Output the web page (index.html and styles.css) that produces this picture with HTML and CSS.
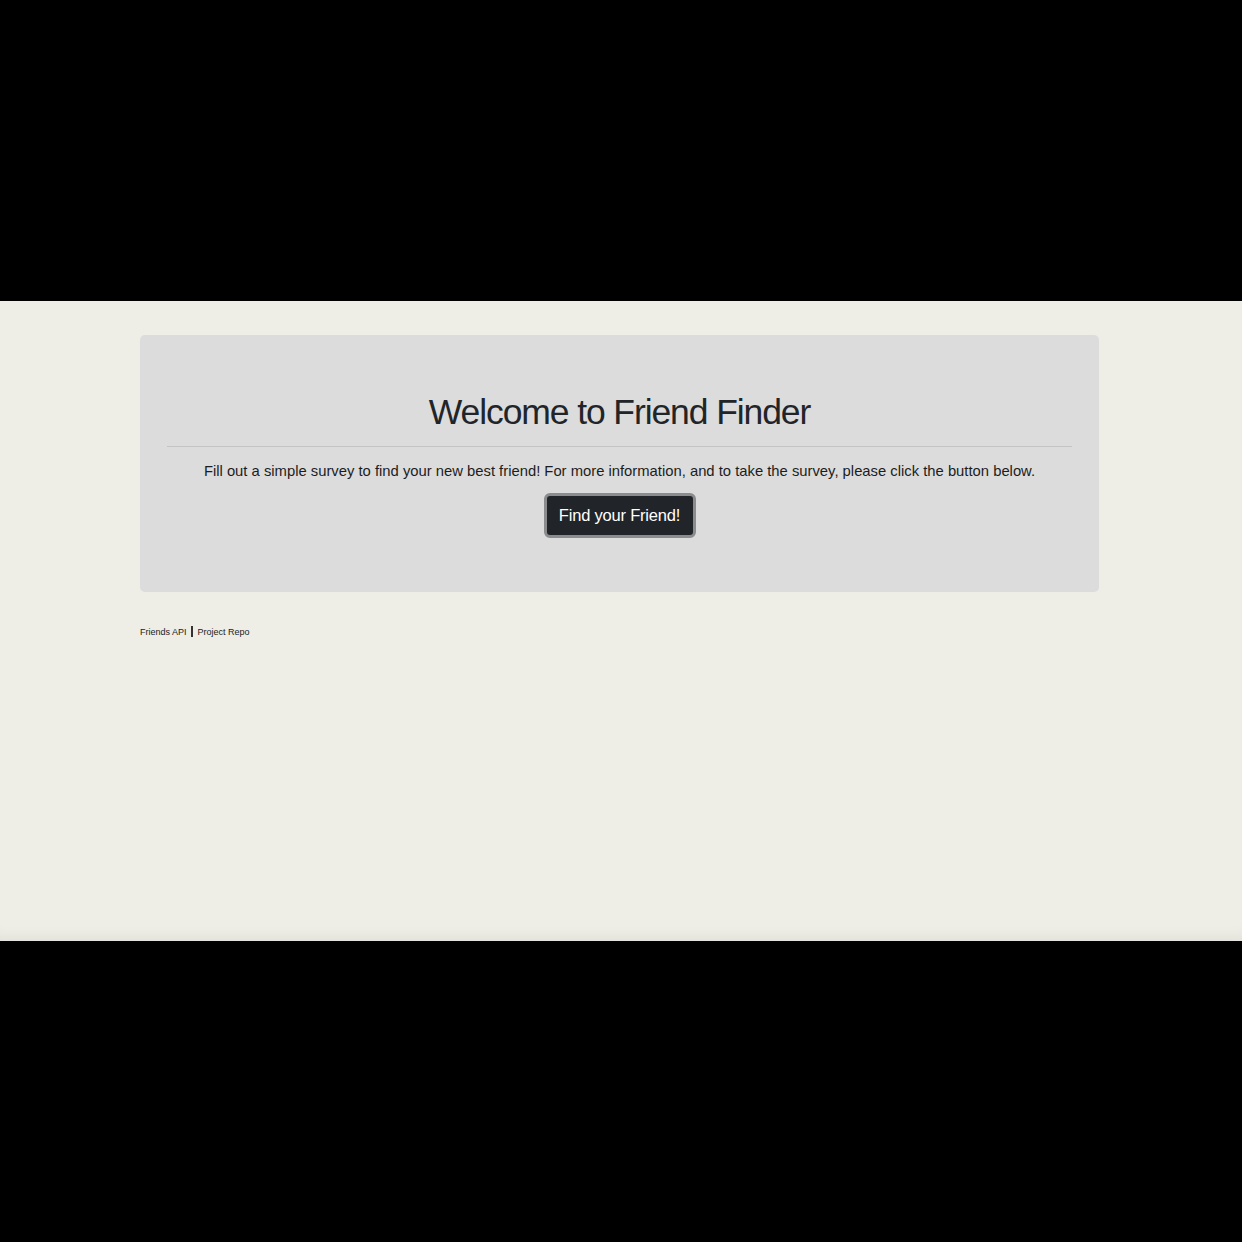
FILE: index.html
```html
<!DOCTYPE html>
<html>
<head>
<meta charset="utf-8">
<link rel="stylesheet" href="styles.css">
</head>
<body>
<div class="letterbox"></div>
<main class="page">
  <div class="container">
    <section class="jumbotron">
      <h1 class="title">Welcome to Friend Finder</h1>
      <hr class="rule">
      <p class="lead">Fill out a simple survey to find your new best friend! For more information, and to take the survey, please click the button below.</p>
      <a class="btn" href="#">Find your Friend!</a>
    </section>
    <footer class="footer">
      <a href="#">Friends API</a><span class="sep"></span><a href="#">Project Repo</a>
    </footer>
  </div>
</main>
<div class="letterbox"></div>
</body>
</html>
```
FILE: styles.css
```css
html, body { margin: 0; padding: 0; background: #000; }
body { font-family: "Liberation Sans", Arial, sans-serif; }
.letterbox { height: 301px; background: #000; }
.page {
  height: 640px;
  background: #eeede6;
  box-shadow: inset 0 -14px 14px -10px rgba(0,0,0,0.06);
  box-sizing: border-box;
  padding-top: 34px;
}
.container { width: 959px; margin: 0 0 0 140px; }
.jumbotron {
  background: #dcdcdc;
  border-radius: 5px;
  padding: 55px 27px 0;
  height: 257px;
  box-sizing: border-box;
  display: flex;
  flex-direction: column;
  align-items: center;
}
.title {
  margin: 0;
  font-weight: 400;
  font-size: 35.5px;
  line-height: 44px;
  color: #212529;
  letter-spacing: -1.1px;
}
.rule {
  align-self: stretch;
  border: 0;
  border-top: 1px solid #c4c4c4;
  margin: 12px 0 0;
}
.lead {
  margin: 14px 0 0;
  font-size: 14.8px;
  line-height: 20px;
  color: #1c1c1c;
}
.btn {
  margin-top: 12px;
  display: inline-block;
  box-sizing: border-box;
  width: 152px;
  height: 45px;
  line-height: 39px;
  text-align: center;
  background: #212529;
  color: #fff;
  font-size: 16.5px;
  text-decoration: none;
  border: 3px solid #8a8c8e;
  border-radius: 6px;
  letter-spacing: -0.2px;
}
.footer {
  margin-top: 34px;
  display: flex;
  align-items: center;
  font-size: 9px;
}
.footer a { color: #222; text-decoration: none; }
.sep {
  display: inline-block;
  width: 2px;
  height: 11px;
  background: #333;
  margin: 0 5px 0 4px;
}
```
